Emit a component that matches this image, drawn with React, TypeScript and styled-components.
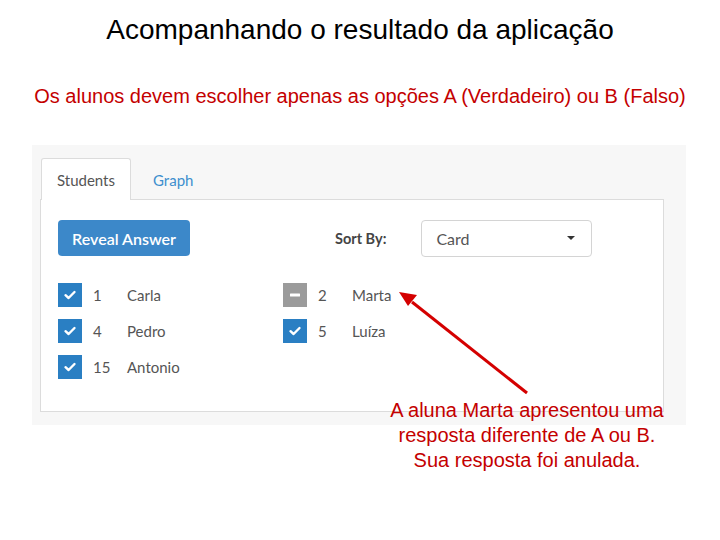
import styled, { createGlobalStyle } from "styled-components";

const GlobalStyle = createGlobalStyle`
    html, body { margin: 0; padding: 0; background: #ffffff; }
    body { font-family: "Liberation Sans", Arial, sans-serif; }
`;

// Slide holding everything
const Slide = styled.div`
    position: relative;
    width: 720px; height: 540px;
    display: flex; flex-direction: column;
    overflow: hidden;
`;
const Title = styled.h1`
    margin: 13px 0 0; text-align: center;
    font-weight: normal; font-size: 28px; line-height: 34px;
    color: #000;
`;
const Subtitle = styled.p`
    margin: 37px 0 0; text-align: center;
    font-size: 20px; line-height: 24px;
    color: #c40000;
`;

// The pasted screenshot of the app
const Shot = styled.div`
    margin: 37px 0 0 32px;
    width: 654px; height: 280px;
    box-sizing: border-box;
    background: #f7f7f7;
    padding: 12px 23px 0 8px;
    font-family: Lato, "Open Sans", sans-serif;
    color: #555;
`;
const Tabs = styled.div`
    display: flex; align-items: flex-end; height: 42px;
    margin-left: 1px;
`;
const Tab = styled.div<{ active?: boolean }>`
    height: 42px; box-sizing: border-box;
    padding: 0 15px;
    display: flex; align-items: center;
    font-size: 15px;
    color: ${(p) => (p.active ? "#555" : "#3d8fce")};
    background: ${(p) => (p.active ? "#fff" : "transparent")};
    border: 1px solid ${(p) => (p.active ? "#dcdcdc" : "transparent")};
    border-bottom: none;
    border-radius: 3px 3px 0 0;
    margin-bottom: -1px;
    position: relative;
    ${(p) => (p.active ? "width: 90px;" : "padding-left: 21px;")}
`;
const Panel = styled.div`
    width: 624px; height: 213px; box-sizing: border-box;
    background: #fff;
    border: 1px solid #dcdcdc;
    padding: 20px 16px 0 17px;
`;
const Toolbar = styled.div`
    display: flex; align-items: center; height: 36px;
`;
const RevealButton = styled.button`
    width: 132px; height: 36px;
    border: none; border-radius: 4px;
    background: #3c88c9; color: #fff;
    font-family: Lato, "Open Sans", sans-serif;
    font-size: 16px; font-weight: 600;
    padding: 0;
`;
const SortLabel = styled.span`
    margin-left: 145px;
    font-size: 14.5px; font-weight: 700; color: #444;
`;
const Select = styled.div`
    margin-left: 35px;
    width: 171px; height: 37px; box-sizing: border-box;
    border: 1px solid #d4d4d4; border-radius: 4px;
    display: flex; align-items: center; justify-content: space-between;
    padding: 0 16px 0 14px;
    font-size: 16px; color: #555;
`;
const Caret = styled.span`
    width: 0; height: 0;
    border-left: 4px solid transparent;
    border-right: 4px solid transparent;
    border-top: 4px solid #333;
`;
const Roster = styled.div`
    margin-top: 27px;
    display: grid; grid-template-columns: 225px 225px;
    grid-auto-rows: 36px;
`;
const Row = styled.div`
    display: flex; align-items: flex-start;
    font-size: 15px; color: #555;
`;
const Box = styled.span<{ annulled?: boolean }>`
    width: 24px; height: 24px; flex: none;
    background: ${(p) => (p.annulled ? "#9b9b9b" : "#2a7fc3")};
    display: flex; align-items: center; justify-content: center;
`;
const Num = styled.span`
    width: 34px; margin-left: 11px; line-height: 24px;
`;
const Name = styled.span`
    line-height: 24px;
`;

// Red annotation over the screenshot
const Note = styled.div`
    position: absolute; left: 360px; top: 398px; width: 334px;
    text-align: center;
    font-size: 20px; line-height: 25px;
    color: #c40000;
`;
const Arrow = styled.svg`
    position: absolute; left: 0; top: 0;
    pointer-events: none;
`;

const Check = () => (
    <svg width="14" height="14" viewBox="0 0 14 14">
        <path d="M2.5 7.2 L5.6 10 L11.5 4" fill="none" stroke="#fff" strokeWidth="2.4" strokeLinecap="round" strokeLinejoin="round" />
    </svg>
);
const Minus = () => (
    <svg width="14" height="14" viewBox="0 0 14 14">
        <rect x="2" y="5.5" width="10" height="3" rx="0.5" fill="#fff" />
    </svg>
);

const students = [
    { num: 1, name: "Carla" },
    { num: 2, name: "Marta", annulled: true },
    { num: 4, name: "Pedro" },
    { num: 5, name: "Luíza" },
    { num: 15, name: "Antonio" },
];

export default function App() {
    return (
        <>
            <GlobalStyle />
            <Slide>
                <Title>Acompanhando o resultado da aplicação</Title>
                <Subtitle>Os alunos devem escolher apenas as opções A (Verdadeiro) ou B (Falso)</Subtitle>
                <Shot>
                    <Tabs>
                        <Tab active>Students</Tab>
                        <Tab>Graph</Tab>
                    </Tabs>
                    <Panel>
                        <Toolbar>
                            <RevealButton>Reveal Answer</RevealButton>
                            <SortLabel>Sort By:</SortLabel>
                            <Select>
                                <span>Card</span>
                                <Caret />
                            </Select>
                        </Toolbar>
                        <Roster>
                            {students.map((s) => (
                                <Row key={s.num}>
                                    <Box annulled={s.annulled}>{s.annulled ? <Minus /> : <Check />}</Box>
                                    <Num>{s.num}</Num>
                                    <Name>{s.name}</Name>
                                </Row>
                            ))}
                        </Roster>
                    </Panel>
                </Shot>
                <Arrow width="720" height="540" viewBox="0 0 720 540">
                    <line x1="527" y1="393" x2="412" y2="302" stroke="#d40000" strokeWidth="3" />
                    <polygon points="399,292 417,295 408,306" fill="#d40000" />
                </Arrow>
                <Note>
                    A aluna Marta apresentou uma<br />
                    resposta diferente de A ou B.<br />
                    Sua resposta foi anulada.
                </Note>
            </Slide>
        </>
    );
}
